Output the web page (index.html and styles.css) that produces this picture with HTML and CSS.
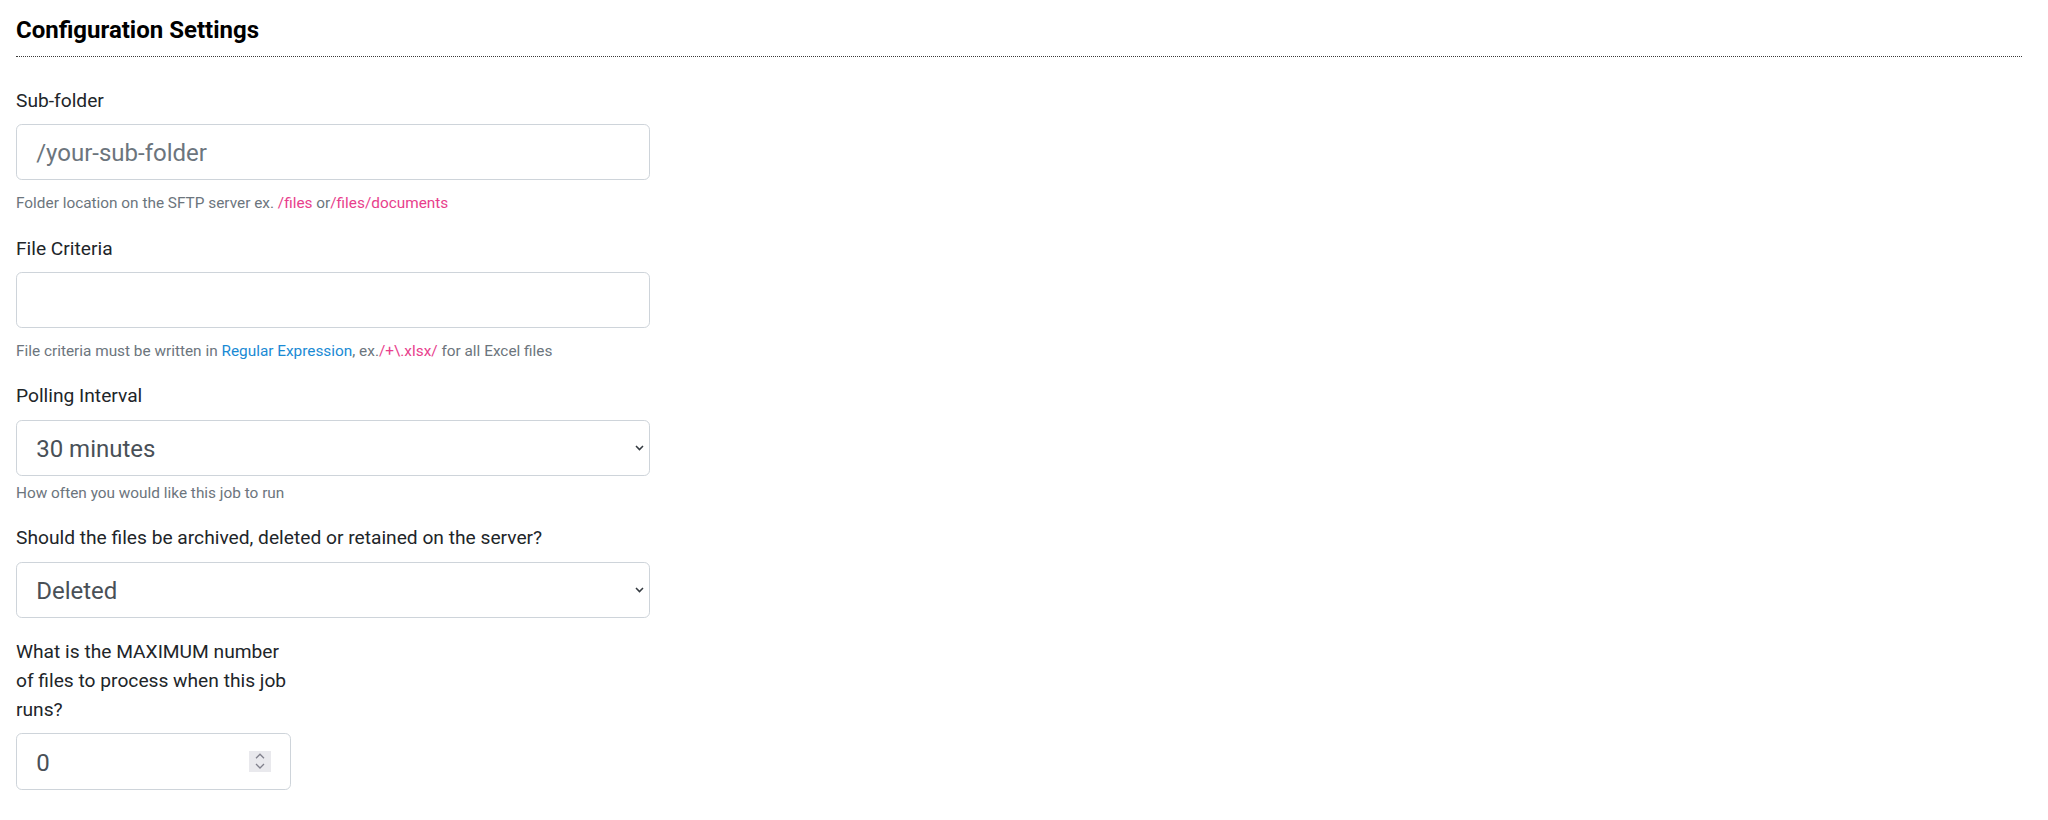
FILE: index.html
```html
<!DOCTYPE html>
<html lang="en">
<head>
<meta charset="utf-8">
<title>Configuration Settings</title>
<link rel="stylesheet" href="styles.css">
</head>
<body>
<div class="page">
  <h5 class="section-title">Configuration Settings</h5>
  <form class="settings">
    <div class="field">
      <label class="field-label" for="subfolder">Sub-folder</label>
      <input class="control" id="subfolder" type="text" placeholder="/your-sub-folder">
      <small class="hint hint-code">Folder location on the SFTP server ex. <code>/files</code> or<code>/files/documents</code></small>
    </div>
    <div class="field">
      <label class="field-label" for="criteria">File Criteria</label>
      <input class="control" id="criteria" type="text">
      <small class="hint hint-code">File criteria must be written in <a href="#" class="hint-link">Regular Expression</a>, ex.<code>/+\.xlsx/</code> for all Excel files</small>
    </div>
    <div class="field">
      <label class="field-label" for="interval">Polling Interval</label>
      <div class="select-wrap">
        <select class="control select" id="interval">
          <option>30 minutes</option>
        </select>
        <svg class="select-arrow" width="9" height="6" viewBox="0 0 9 6"><polyline points="1,1 4.5,4.6 8,1" fill="none" stroke="#343a40" stroke-width="1.5"/></svg>
      </div>
      <small class="hint">How often you would like this job to run</small>
    </div>
    <div class="field">
      <label class="field-label" for="retention">Should the files be archived, deleted or retained on the server?</label>
      <div class="select-wrap">
        <select class="control select" id="retention">
          <option>Deleted</option>
        </select>
        <svg class="select-arrow" width="9" height="6" viewBox="0 0 9 6"><polyline points="1,1 4.5,4.6 8,1" fill="none" stroke="#343a40" stroke-width="1.5"/></svg>
      </div>
    </div>
    <div class="field field-narrow">
      <label class="field-label" for="maxfiles">What is the MAXIMUM number of files to process when this job runs?</label>
      <div class="number-wrap">
        <input class="control number" id="maxfiles" type="number" value="0">
        <span class="spinner"><svg width="22" height="21" viewBox="0 0 22 21"><polyline points="7,7.2 11,3.2 15,7.2" fill="none" stroke="#80808c" stroke-width="1.3"/><polyline points="7,13 11,17 15,13" fill="none" stroke="#80808c" stroke-width="1.3"/></svg></span>
      </div>
    </div>
  </form>
</div>
</body>
</html>
```

FILE: styles.css
```css
html, body {
  margin: 0;
  padding: 0;
  background: #ffffff;
}

body {
  font-family: Roboto, "Liberation Sans", Arial, sans-serif;
  font-size: 19.2px;
  line-height: 1.5;
  color: #212529;
}

.page {
  padding: 16px 26px 0 16px;
}

.section-title {
  margin: 0;
  padding-bottom: 11.2px;
  font-size: 24px;
  line-height: 28.8px;
  font-weight: 700;
  color: #000000;
  border-bottom: 1px dotted #3a3a3a;
}

.settings {
  margin-top: 28.6px;
  width: 634px;
}

.field {
  margin-bottom: 19.2px;
}

.field-narrow {
  width: 275px;
}

.field-label {
  display: block;
  padding-top: 1px;
  margin-bottom: 8.6px;
  line-height: 28.8px;
}

.control {
  display: block;
  box-sizing: border-box;
  width: 100%;
  height: 56.5px;
  margin: 0;
  padding: 2px 19.2px 0;
  font-family: Roboto, "Liberation Sans", Arial, sans-serif;
  font-size: 24px;
  color: #495057;
  background: #ffffff;
  border: 1px solid #ced4da;
  border-radius: 5.76px;
  outline: none;
}

.control::placeholder {
  color: #6c757d;
  opacity: 1;
}

.select-wrap,
.number-wrap {
  position: relative;
}

.select {
  -webkit-appearance: none;
  appearance: none;
}

.select-arrow {
  position: absolute;
  right: 6px;
  top: calc(50% - 3px);
}

.number {
  -moz-appearance: textfield;
}

.number::-webkit-inner-spin-button,
.number::-webkit-outer-spin-button {
  -webkit-appearance: none;
  margin: 0;
}

.spinner {
  position: absolute;
  right: 20px;
  top: 18px;
  width: 22px;
  height: 21px;
  background: #e9e9ed;
  display: flex;
}

.hint {
  display: block;
  margin-top: 4.8px;
  padding-top: 1px;
  margin-bottom: -1px;
  font-size: 15.36px;
  line-height: 23.04px;
  color: #6c757d;
}

.hint-code {
  margin-top: 10.8px;
}

.hint code {
  font-family: inherit;
  font-size: inherit;
  color: #e83e8c;
}

.hint-link {
  color: #1a8ad4;
  text-decoration: none;
}
```
